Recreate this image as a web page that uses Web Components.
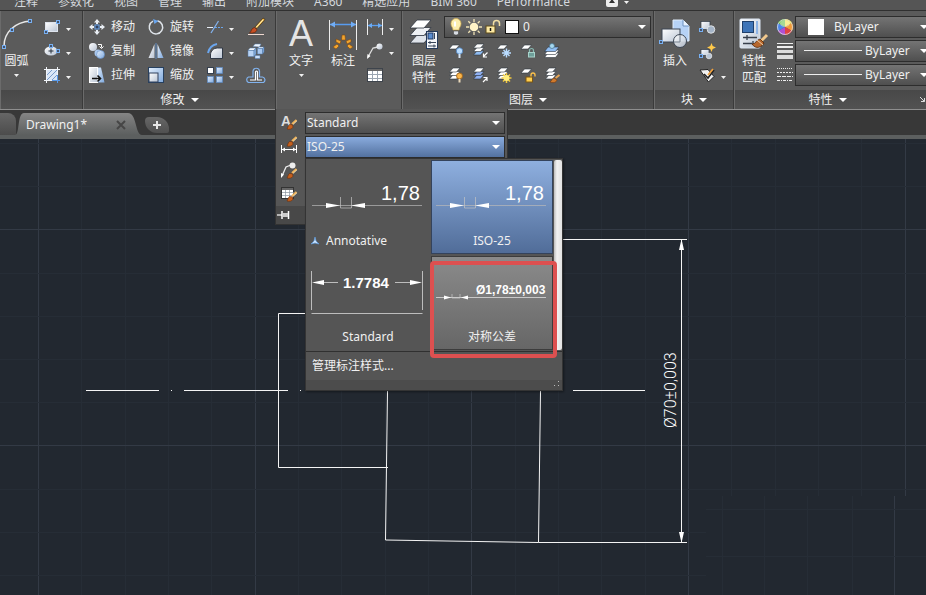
<!DOCTYPE html>
<html lang="zh-CN">
<head>
<meta charset="utf-8">
<title>Drawing1</title>
<style>
html,body{height:100%;margin:0}
body{overflow:hidden;background:#222830;color:#f0f0f0;font:12px/16px "Noto Sans","Noto Sans CJK SC",sans-serif}
</style>
</head>
<body>
<cad-app></cad-app>
<script>
const RESET = `*{box-sizing:border-box}
button,select{font:inherit;color:inherit;background:none;border:0;padding:0;margin:0}
button{cursor:pointer}svg{display:block}`;

function define(name, css, html) {
  customElements.define(name, class extends HTMLElement {
    connectedCallback() {
      if (this.shadowRoot) return;
      const root = this.attachShadow({ mode: 'open' });
      root.innerHTML = `<style>${RESET}${css}</style>${html(this)}`;
    }
  });
}

/* ---------- icon drawing helpers ---------- */
const DEFS = `<defs>
<linearGradient id="w" x1="0" y1="0" x2="1" y2="1"><stop offset="0" stop-color="#fff"/><stop offset="1" stop-color="#b9c4d4"/></linearGradient>
<linearGradient id="b" x1="0" y1="0" x2="1" y2="1"><stop offset="0" stop-color="#e4effc"/><stop offset="1" stop-color="#7fa9de"/></linearGradient>
</defs>`;
const node = (x, y) => `<rect x="${x}" y="${y}" width="3" height="3" fill="#45536b" stroke="#78b0f2"/>`;
const sheet = (x, y, f = '#fff') => `<path d="M${x + 4} ${y}h7l-3.500 4h-7z" fill="${f}" stroke="#2e3540" stroke-width=".6"/>`;
const stack = (c) => sheet(1, 8, c[2]) + sheet(1, 4.5, c[1]) + sheet(1, 1, c[0]);
const brush = (x, y) => `<g transform="translate(${x} ${y})"><path d="M5 4 9.500 0" stroke="#f0b45c" stroke-width="2"/><path d="M6 4.500 10 .8" stroke="#fff2cf" stroke-width=".7"/><path d="M0 9c1-1 .6-3 2.500-4.500l3 .3.500 2.400C4.500 9.500 2 9.600 0 9z" fill="#c4601e" stroke="#6b2e0a" stroke-width=".6"/></g>`;

const ICONS = {
  arc: [32, 32, `<path d="M3 28C3 15 13 4 30 3" fill="none" stroke="#e8e8e8" stroke-width="1.500"/>${node(1.5, 27.5)}${node(9.5, 10.5)}${node(27.5, 1.5)}`],
  rect: [16, 16, `<rect x="1.500" y="3.500" width="12" height="9" fill="url(#w)" stroke="#dfe5ee"/>${node(.5, 11.5)}${node(12.5, 1.5)}`],
  ellipse: [16, 16, `<ellipse cx="7" cy="8" rx="6.500" ry="4.500" fill="url(#w)"/><path d="M7 5.500v5M4.500 8h5" stroke="#27303d"/>${node(5.5, 1.5)}${node(12.5, 6.5)}`],
  hatch: [16, 16, `<rect x="3" y="3" width="10" height="10" fill="#dbe7f7"/><path d="M3 8l5-5M3 13l10-10M8 13l5-5" stroke="#6d93c6" stroke-width=".9"/><path d="M2.500 0v16M13.500 0v8M0 2.500h16M0 13.500h8" stroke="#f2f5fa"/><path d="M13.500 8v8M8 13.500h8" stroke="#5b9bea"/>`],
  move: [16, 16, `<g fill="#e9eef4"><path d="M8 0l3 3.500H9V5H7V3.500H5zM8 16l3-3.500H9V11H7v1.500H5zM0 8l3.500-3v2H5v2H3.500v2zM16 8l-3.500-3v2H11v2h1.500v2z"/></g><rect x="6" y="6" width="4" height="4" fill="#31415c" stroke="#6ea8ee"/>`],
  copy: [16, 16, `<circle cx="4" cy="4" r="4" fill="url(#w)"/><circle cx="9" cy="10" r="3.500" fill="#a9c7ed"/><circle cx="11.500" cy="11.500" r="4" fill="url(#b)" stroke="#5d8ac4" stroke-width=".6"/><path d="M9 1.500h3.500v3M10.500 3.500l2 2 2-2" fill="none" stroke="#fff"/>`],
  stretch: [16, 16, `<path d="M7 .5h5L15.500 15.500H7z" fill="url(#b)"/><rect x=".5" y=".5" width="8" height="15" fill="url(#w)" stroke="#fff"/><path d="M3 11.500h8M8.500 8.500l3 3-3 3" fill="none" stroke="#111" stroke-width="1.600"/>`],
  rotate: [16, 16, `<path d="M9.500 1.700A6.700 6.700 0 1 1 5 2.200" fill="none" stroke="#dfe4ea" stroke-width="1.500"/><path d="M5 0l5.500 2L6.500 5z" fill="#69a5ee"/>`],
  mirror: [16, 16, `<path d="M6.500 1v14H.5z" fill="url(#w)"/><path d="M9.500 1v14h6z" fill="url(#b)"/><path d="M8 0v16" stroke="#5f9ae0" stroke-width=".8"/>`],
  scale: [16, 16, `<rect x=".5" y=".5" width="15" height="15" fill="url(#b)" stroke="#27405f"/><rect x="1" y="6" width="9" height="9" fill="url(#w)" stroke="#31415c"/>`],
  trim: [16, 16, `<path d="M0 8.500h6" stroke="#e8edf5"/><path d="M8 8.500h8" stroke="#6aa4ea" stroke-dasharray="2 1"/><path d="M4 14 11.500 2" stroke="#82b2ee" stroke-width="1.300"/>`],
  fillet: [16, 16, `<path d="M3.500 15.500V12c0-4 3-7 7-7h5v10.500z" fill="url(#w)" stroke="#303947"/><path d="M1 10c1-5 4-8 9-9" fill="none" stroke="#6ba6ee" stroke-width="2"/>`],
  array: [16, 16, `<rect x=".5" y=".5" width="6" height="6" fill="#fff" stroke="#35404f"/><g fill="url(#b)" stroke="#5d8ac4" stroke-width=".7"><rect x="9.500" y=".5" width="6" height="6"/><rect x=".5" y="9.500" width="6" height="6"/><rect x="9.500" y="9.500" width="6" height="6"/></g>`],
  erase: [18, 18, `<path d="M1 16.500h16" stroke="#f0d9d0"/><path d="M8 9 16 0l2 1.500-8 9z" fill="#f4bd4e" stroke="#3c2a12" stroke-width=".7"/><path d="M9 9.500 16 2" stroke="#fff0b5"/><path d="M2.500 15c2-1 1.500-5 5-5.500l2.500 2c-.5 3-4 4-7.500 3.500z" fill="#c64f23" stroke="#632309" stroke-width=".7"/>`],
  explode: [16, 16, `<g stroke="#547caf" stroke-width=".5"><path d="M5 3.500 7 1h6l-1.500 3z" fill="#eef5fd"/><path d="M0 7.500 2 5h6L6 7.500z" fill="#f2f7fd"/><path d="M0 7.500h6v6H0z" fill="#b9d3f3"/><path d="M6 7.500 8 5v6l-2 2.500z" fill="#86aede"/><path d="M9.500 5.500 11 4h5l-1.500 1.500z" fill="#eef5fd"/><path d="M9.500 5.500h5v5.500h-5z" fill="#a9c8ef"/><path d="M14.500 5.500 16 4v5l-1.500 2z" fill="#7fa8da"/><path d="M7 12.500h5v3H7z" fill="#c9def8"/></g>`],
  offset: [18, 16, `<path d="M1.500 15.500a3 3 0 0 1 0-5.500h4.500V4a3.300 3.300 0 0 1 6.500 0v6h3a3 3 0 0 1 1 5.500z" fill="none" stroke="#81b3ef" stroke-width="1.200"/><path d="M3 13h5.500V5a1 1 0 0 1 2 0v8H15" fill="none" stroke="#fff" stroke-width="1.200"/>`],
  text: [32, 32, `<text x="4" y="28" font-family="Liberation Sans,sans-serif" font-size="36" fill="#e4e4e4">A</text>`],
  dim: [30, 32, `<path d="M1.500 2v30M28.500 2v30" stroke="#eee"/><path d="M2 6.500h26" stroke="#589cf0" stroke-width="1.500"/><path d="M2 6.500l5-3v6zM28 6.500l-5-3v6z" fill="#70adf6"/><g fill="#f2a52f" stroke="#7b4612" stroke-width=".6"><path d="M5 29l4-3 2 2-3 3zM8 21l5 2-1 3-4-2zM14 17h3l.5 5h-4zM23 21l-5 2 1 3 4-2zM25 29l-4-3-2 2 3 3z"/></g>`],
  linear: [16, 16, `<path d="M.5 0v16M15.500 0v16" stroke="#eee"/><path d="M1 6.500h14" stroke="#5b9ff2" stroke-width="1.300"/><path d="M1 6.500l4-2.500v5zM15 6.500l-4-2.500v5z" fill="#6aacf7"/>`],
  leader: [16, 16, `<path d="M1 14 6 5l5-1" fill="none" stroke="#ddd" stroke-width="1.300"/><path d="M0 16l.5-5 3 2z" fill="#fff"/><circle cx="12.500" cy="3.500" r="3" fill="url(#w)"/>`],
  table: [16, 16, `<rect x=".5" y="1.500" width="15" height="13" fill="#fff" stroke="#3e444c"/><path d="M1 3h14" stroke="#333" stroke-width="1.500"/><path d="M1 7.500h14M1 11.500h14M5.500 4v10M10.500 4v10" stroke="#9aa4b0"/>`],
  layers: [30, 32, `<g stroke="#2e3540" stroke-width=".8"><path d="M8 17h14l-7 8H1z" fill="#dfe3ea"/><path d="M8 9.500h14l-7 8H1z" fill="#eef0f4"/><path d="M8 2h14l-7 8H1z" fill="#fff"/></g><rect x="17.500" y="13.500" width="11" height="17" fill="#f4f6fa" stroke="#253a5c"/><rect x="19" y="15" width="5" height="6" fill="#5b8dd0" stroke="#1f3760"/><path d="M25.500 15v6M19 24.500h8M19 28h8" stroke="#39465a"/><path d="M21 23v3M25 26.500v3" stroke="#39465a"/>`],
  bulb: [14, 18, `<path d="M4 12C4 9 2 9 2 5.500a5 5 0 0 1 10 0C12 9 10 9 10 12z" fill="#fdeeae" stroke="#d4ad4c" stroke-width=".7"/><path d="M6 3.500v5" stroke="#fff" stroke-width="2"/><path d="M4.500 13h5v3l-1.500 1H6l-1.500-1z" fill="#d9dde3" stroke="#444" stroke-width=".6"/>`],
  sun: [16, 16, `<g stroke="#f1e3b5" stroke-width="1.300"><path d="M8 0v3M8 13v3M0 8h3M13 8h3M2.300 2.300l2 2M11.700 11.700l2 2M2.300 13.700l2-2M11.700 4.300l2-2"/></g><circle cx="8" cy="8" r="4.300" fill="#fff3c7"/>`],
  unlock: [16, 16, `<path d="M8.500 8V4.500a3 3 0 0 1 6 0V7" fill="none" stroke="#f3dfa4" stroke-width="1.500"/><rect x="1" y="7" width="9" height="7" fill="#fde9a3" stroke="#5c4a1a"/><path d="M5.500 9v3" stroke="#111" stroke-width="1.500"/>`],
  white: [16, 16, `<rect x="1.500" y="1.500" width="13" height="13" fill="#fff" stroke="#111"/>`],
  swatch: [16, 16, `<rect width="16" height="16" fill="#fff"/>`],
  lyoff: [16, 16, `${sheet(.5, 2)}<circle cx="11.500" cy="8" r="3.200" fill="#b9dcff" stroke="#4a7db9" stroke-width=".8"/><path d="M11.500 11v4" stroke="#d7e6f6" stroke-width="2"/>`],
  lyiso: [16, 16, `${stack(['#fff', '#fff', '#8fbcf2'])}<path d="M15.500 9.500l-4 4M11.500 10.500v3.500H15" fill="none" stroke="#fff" stroke-width="1.200"/>`],
  lyfrz: [16, 16, `${sheet(.5, 2)}<g stroke="#b9dcff" stroke-width="1.400"><path d="M10.500 5.500v9M6 10h9M7.500 7l6 6M13.500 7l-6 6"/></g>`],
  lylck: [16, 16, `${sheet(.5, 2)}<path d="M9.500 9V7.500a2 2 0 0 1 4 0V9" fill="none" stroke="#88bbb2" stroke-width="1.200"/><rect x="8.500" y="9.500" width="6" height="4.500" fill="#6f9f9a" stroke="#a7d2ca"/>`],
  lycur: [16, 16, `<g stroke="#2e3540" stroke-width=".6"><path d="M4 10h11l-3.500 4.500h-11z" fill="#fff"/><path d="M4 7h11l-3.500 4.500h-11z" fill="#fff"/><path d="M4 4h11l-3.500 4.500h-11z" fill="#8fbcf2"/></g><circle cx="8" cy="3" r="2.500" fill="#a6d8ef" stroke="#44718c" stroke-width=".7"/>`],
  lyon: [16, 16, `${stack(['#fff', '#fff', '#fff'])}<circle cx="11.500" cy="9" r="3" fill="#fbb64b" stroke="#9c5f14" stroke-width=".8"/><path d="M11.500 12v3.500" stroke="#ead9bb" stroke-width="2"/>`],
  lyuniso: [16, 16, `${stack(['#fff', '#8fb0f2', '#8fb0f2'])}<path d="M11 15l4-4M11.500 10.500H15V14" fill="none" stroke="#fff" stroke-width="1.200"/>`],
  lythw: [16, 16, `${stack(['#fff', '#fff', '#fff'])}<g stroke="#f4c93d" stroke-width="1.500"><path d="M10.500 6v10M5.500 11h10M7 7.500l7 7M14 7.500l-7 7"/></g><circle cx="10.500" cy="11" r="3" fill="#ffef80"/>`],
  lyulk: [16, 16, `${sheet(.5, 2)}<path d="M11 10V8a2 2 0 0 1 4 0v1.500" fill="none" stroke="#ffc34a" stroke-width="1.300"/><rect x="6" y="10" width="6.500" height="5" fill="#ffcf50" stroke="#7c5613"/>`],
  lymch: [16, 16, `${stack(['#fff', '#fff', '#fff'])}<path d="M15.500 8l-4 3" stroke="#e8a552" stroke-width="2"/><path d="M6 15c2-1 1-3 4-4l3 2c-1 3-4 3-7 2z" fill="#d07a2c" stroke="#74380e" stroke-width=".6"/>`],
  insert: [32, 32, `<path d="M14 2h10l6 6v15H14z" fill="#b6d2f6" stroke="#e1edfb"/><path d="M24 2v6h6" fill="#e8f2ff" stroke="#6d92c2"/><rect x="3" y="11" width="18" height="13" fill="url(#w)" stroke="#3c4654"/><circle cx="21" cy="23" r="6.500" fill="url(#w)" fill-opacity=".9" stroke="#3c4654"/><path d="M21 17v7h-6" fill="none" stroke="#7a8592"/>${node(.5, 22.5)}`],
  bedit: [16, 16, `<rect x="2" y="2.500" width="9" height="8" fill="url(#w)" stroke="#303947" stroke-width=".7"/><circle cx="12" cy="10.500" r="3.800" fill="#a5b5c8" stroke="#eee" stroke-width=".8"/>${node(.5, 9.5)}`],
  bnew: [16, 16, `<rect x="2" y="6.500" width="8" height="6" fill="url(#w)" stroke="#303947" stroke-width=".7"/><circle cx="10" cy="13" r="2.800" fill="#b8c5d5" stroke="#eee" stroke-width=".7"/><path d="M12.500 0l1.200 3L17 4.500 13.700 6l-1.200 3-1.200-3L8 4.500 11.300 3z" fill="#ffc94a"/>${node(.5, 11.5)}`],
  battr: [16, 16, `<path d="M1 3l8-.5 6 7-5.500 5.500z" fill="#f2f2f2" stroke="#222"/><path d="M5 7l4 4 6-8" fill="none" stroke="#222" stroke-width="1.600"/><path d="M9 8l5-6" stroke="#f0a13e" stroke-width="1.800"/>`],
  match: [30, 32, `<rect x="1" y="1" width="20" height="29" rx="1" fill="url(#w)" stroke="#dce6f3"/><rect x="3.500" y="3.500" width="11" height="11" fill="#3f75b8" stroke="#20406c"/><path d="M18 3v13" stroke="#8eb4e6" stroke-width="2"/><path d="M4 19.500h14M8 17v5M4 25.500h9M14 23v4" stroke="#38404c" stroke-width="1.300"/><path d="M22 23l6-6" stroke="#f0c78c" stroke-width="3"/><path d="M13 26c4 0 4-4 8-5l4 4c-2 4-8 7-12 1z" fill="#b8672d" stroke="#532708" stroke-width=".8"/><path d="M18 22l6 5" stroke="#ead2ae"/>`],
  wheel: [16, 16, `<path d="M8 8V0a8 8 0 0 1 7 4z" fill="#f4df4e"/><path d="M8 8l7-4a8 8 0 0 1 0 8z" fill="#f29a37"/><path d="M8 8l7 4a8 8 0 0 1-7 4z" fill="#e04242"/><path d="M8 8v8a8 8 0 0 1-7-4z" fill="#b04fd2"/><path d="M8 8l-7 4a8 8 0 0 1 0-8z" fill="#4b85ea"/><path d="M8 8L1 4a8 8 0 0 1 7-4z" fill="#69c04d"/><ellipse cx="8" cy="4.500" rx="5" ry="3.500" fill="#fff" opacity=".4"/><circle cx="8" cy="8" r="7.500" fill="none" stroke="#ddd" stroke-width=".8"/>`],
  weight: [16, 16, `<path d="M0 .5h16" stroke="#eee"/><path d="M0 4h16" stroke="#eee" stroke-width="2"/><path d="M0 8.500h16" stroke="#ddd" stroke-width="3"/><path d="M0 14h16" stroke="#ddd" stroke-width="4"/>`],
  ltype: [16, 16, `<g stroke="#eee"><path d="M0 1.500h16" stroke-dasharray="1 1"/><path d="M0 5.500h16" stroke-dasharray="2 1"/><path d="M0 9.500h16" stroke-dasharray="4 1"/><path d="M0 13.500h16" stroke-dasharray="3 1 1 1"/></g>`],
  line: [58, 16, `<path d="M0 7.500h58" stroke="#eee"/>`],
  stext: [16, 16, `<text x="0" y="12" font-family="Liberation Sans,sans-serif" font-size="14" font-weight="bold" fill="#ddd">A</text>${brush(6, 6)}`],
  sdim: [16, 16, `<path d="M.5 7v8M15.500 7v8M1 11.500h14" stroke="#fff"/><path d="M1 11.500l3-2v4zM15 11.500l-3-2v4z" fill="#fff"/>${brush(6, -1)}`],
  sleader: [16, 16, `<path d="M1 14 5 5l5-2" fill="none" stroke="#eee" stroke-width="1.300"/><path d="M0 16v-5l3 1.500z" fill="#fff"/><circle cx="11.500" cy="3.500" r="3" fill="#eee"/>${brush(6, 7)}`],
  stable: [16, 16, `<rect x=".5" y="1.500" width="12" height="11" fill="#fff" stroke="#333"/><path d="M1 3h11" stroke="#333" stroke-width="1.500"/><path d="M1 6.500h12M1 9.500h12M4.500 4v8M8.500 4v8" stroke="#8b95a1" stroke-width=".7"/>${brush(6, 6)}`],
  pin: [14, 12, `<path d="M0 6h5" stroke="#fff" stroke-width="1.200"/><path d="M5 2v8M11.500 2v8" stroke="#fff" stroke-width="1.500"/><path d="M6 4h5v4H6z" fill="#ccc"/>`],
  anno: [8, 8, `<path d="M4 0l1 4 3 3-4-1-4 1 3-3z" fill="#cfe6ff" stroke="#5c9be0" stroke-width=".7"/>`],
  down6: [5, 3, `<path d="M0 0h5L2.500 3z" fill="#f2f2f2"/>`],
  down8: [8, 4, `<path d="M0 0h8L4 4z" fill="#fff"/>`],
  launch: [5, 5, `<path d="M0 0l4.500 4.500M4.500 1v3.500H1" fill="none" stroke="#ddd"/>`],
  media: [12, 10, `<rect width="12" height="10" rx="2" fill="#eee"/><path d="M6 2l3 4H3z" fill="#333"/>`],
  plus: [8, 8, `<path d="M4 0v8M0 4h8" stroke="#e6e6e6" stroke-width="2"/>`],
  close: [8, 8, `<path d="M0 0l8 8M8 0L0 8" stroke="#464646" stroke-width="2"/>`],
  grip: [8, 8, `<g fill="#bbb"><path d="M5 0h1v1H5zM5 4h1v1H5zM1 4h1v1H1z"/></g>`]
};

define('cad-icon', `:host{display:inline-block;flex:none;line-height:0}svg{overflow:visible}`, el => {
  const [w, h, body] = ICONS[el.getAttribute('name')];
  return `<svg width="${w}" height="${h}" viewBox="0 0 ${w} ${h}" aria-hidden="true">${DEFS}${body}</svg>`;
});

/* ---------- controls ---------- */
define('cad-tool', `
:host{display:block}
button{display:flex;align-items:center;gap:6px;height:24px;white-space:nowrap}
.i{width:16px;display:flex;justify-content:center}
:host([big]) button{flex-direction:column;gap:0;height:auto;width:100%}
:host([big]) .i{height:37px;width:32px;align-items:center}
:host([big]) .t{line-height:17px}
:host([big]) .d{height:12px;display:flex;align-items:center}
.t span{display:block}`, el => {
  const label = el.getAttribute('label'), hint = el.getAttribute('hint');
  return `<button type="button"${hint ? ` aria-label="${hint}"` : ''}><span class="i"><cad-icon name="${el.getAttribute('icon')}"></cad-icon></span>${
    label ? `<span class="t">${label.split(' ').map(s => `<span>${s}</span>`).join('')}</span>` : ''}${
    el.hasAttribute('menu') ? '<span class="d"><cad-icon name="down6"></cad-icon></span>' : ''}</button>`;
});

define('cad-combo', `
:host{display:flex;align-items:center;height:22px;border:1px solid #2d2d2d;background:linear-gradient(#747474,#4f4f4f);padding-right:4px}
:host([active]){background:linear-gradient(#89abdd,#53719f)}
select{appearance:none;flex:1;min-width:0;height:20px;outline:0;line-height:20px}
option{background:#555}
.d{pointer-events:none}`, el => `<slot></slot><select aria-label="${el.getAttribute('hint')}"><option>${el.getAttribute('value')}</option></select><cad-icon class="d" name="down8"></cad-icon>`);

define('cad-panel', `
:host{display:flex;flex-direction:column;min-width:0;border-right:1px solid #3a3a3a;border-left:1px solid #6b6b6b;background:#5b5b5b;position:relative}
.body{height:79px;padding-top:4px;display:flex;align-items:flex-start}
.title{display:flex;justify-content:center;align-items:center;gap:6px;width:100%;height:19px;background:linear-gradient(#484848,#525252)}
:host([open]) .title{background:none}
:host([launcher]) .foot{display:grid;grid-template-columns:1fr 5px;align-items:center;background:linear-gradient(#484848,#525252);padding-right:8px}
:host([launcher]) .title{background:none}`, el => {
  const t = el.getAttribute('title-text');
  return `<div class="body"><slot></slot></div><div class="foot">${t ? `<button class="title" type="button">${t}<cad-icon name="down8"></cad-icon></button>` : '<div class="title"></div>'}${el.hasAttribute('launcher') ? '<cad-icon name="launch"></cad-icon>' : ''}</div><slot name="over"></slot>`;
});

/* ---------- menu bar ---------- */
const MENUS = ['注释', '参数化', '视图', '管理', '输出', '附加模块', 'A360', '精选应用', 'BIM 360', 'Performance'];
define('cad-menubar', `
:host{display:block;background:#555;border-bottom:1px solid #303030}
nav{display:flex;align-items:flex-end;gap:20px;height:10px;padding-left:14px;overflow:hidden;white-space:nowrap;color:#d4d8dd}
a{color:inherit;text-decoration:none;line-height:16px}
.m{display:flex;align-items:center;gap:6px;height:16px;margin-left:16px}`,
() => `<nav>${MENUS.map(m => `<a href="#">${m}</a>`).join('')}<button class="m" type="button" aria-label="视频"><cad-icon name="media"></cad-icon><cad-icon name="down6"></cad-icon></button></nav>`);

/* ---------- style gallery ---------- */
const dimPreview = `<path d="M5 42.500h110" stroke="#b9b9b9" stroke-width=".7"/><path d="M33.500 34v11h11V34" fill="none" stroke="#c4c4c4" stroke-width=".7"/><path d="M19 40l14 2.500-14 2.500zM58 40l-14 2.500 14 2.500z" fill="#fff"/><text x="74" y="37" font-size="20">1,78</text>`;
const STYLES = [
  ['Annotative', 'anno', dimPreview],
  ['ISO-25', 'sel', dimPreview],
  ['Standard', '', `<path d="M4.500 12v39M115.500 12v39M4.500 54.500h111M16 23.500h15M88 23.500h15" stroke="#d8d8d8" stroke-width=".8" fill="none"/><path d="M5 23.500l12-2.500v5zM115 23.500L103 21v5z" fill="#fff"/><text x="36" y="29" font-size="15" font-weight="bold">1.7784</text>`],
  ['对称公差', 'hot', `<path d="M5 38.500h110" stroke="#ddd" stroke-width=".8"/><path d="M21 35v4h8v-4" fill="none" stroke="#ccc" stroke-width=".7"/><path d="M13 36.500l7 2-7 2zM37 36.500l-7 2 7 2z" fill="#fff"/><text x="45" y="35" font-size="12" font-weight="bold">Ø1,78±0,003</text>`]
];
define('cad-style-gallery', `
:host{display:block;background:#555;border:1px solid #343434;box-shadow:1px 1px 2px #0006}
.top{display:flex;justify-content:space-between;border-bottom:1px solid #303030}
.grid{display:grid;grid-template-columns:122px 122px;gap:2px;padding:1px 0 1px 1px;flex:none}
.cell{position:relative;height:94px;text-align:center;border:0}
.cell svg.p{width:122px;height:68px;font-family:"Liberation Sans",sans-serif;fill:#fff}
.cap{display:flex;justify-content:center;align-items:center;gap:7px;height:20px}
.anno .cap{justify-content:flex-start;padding-left:4px}
.sel{background:linear-gradient(#8fb0e0,#506c98);box-shadow:inset 0 0 0 1px #34435c}
.hot{background:linear-gradient(#8b8b8b,#666);box-shadow:inset 0 0 0 1px #3c3c3c}
.hot::after{content:"";position:absolute;inset:5px -4px -8px -1px;border:4px solid #dd5050;border-radius:4px;z-index:1}
.bar{width:8px;background:linear-gradient(90deg,#bdbdbd,#f2f2f2 3px,#e2e2e2);border-radius:2px;margin:1px 0}
.manage{display:block;width:100%;height:28px;padding-left:6px;text-align:left}
.foot{height:10px;background:#4c4c4c;display:flex;justify-content:flex-end;padding:1px}`,
() => `<div class="top"><div class="grid">${STYLES.map(([n, c, p]) => `<button type="button" class="cell ${c}"><svg class="p" viewBox="0 0 122 68">${p}</svg><span class="cap">${c === 'anno' ? '<cad-icon name="anno"></cad-icon>' : ''}<span>${n}</span></span></button>`).join('')}</div><div class="bar"></div></div>
<button class="manage" type="button">管理标注样式...</button><div class="foot"><cad-icon name="grip"></cad-icon></div>`);

define('cad-style-popup', `
:host{position:absolute;top:100%;left:-2px;width:233px;z-index:5;background:#565656;border:1px solid #333;border-top:0;display:grid;grid-template-columns:29px 1fr}
.tools{display:flex;flex-direction:column;align-items:stretch;padding-top:1px}
cad-tool{padding-left:5px}
.pin{height:18px;background:#484848;display:flex;align-items:center;padding-left:1px}
.combos{display:grid;gap:2px;padding:3px 2px 0 0;align-content:start;position:relative}
.pad{width:1px}
cad-style-gallery{position:absolute;top:49px;left:0;width:258px}`,
() => `<div class="tools"><cad-tool icon="stext" hint="文字样式"></cad-tool><cad-tool icon="sdim" hint="标注样式"></cad-tool><cad-tool icon="sleader" hint="多重引线样式"></cad-tool><cad-tool icon="stable" hint="表格样式"></cad-tool><button class="pin" type="button" aria-label="固定"><cad-icon name="pin"></cad-icon></button></div>
<div class="combos"><cad-combo value="Standard" hint="文字样式"><span class="pad"></span></cad-combo><cad-combo active value="ISO-25" hint="标注样式"><span class="pad"></span></cad-combo><cad-style-gallery></cad-style-gallery></div>`);

/* ---------- ribbon ---------- */
define('cad-ribbon', `
:host{display:block;position:relative;z-index:3;border-bottom:1px solid #8e8e8e;background:#5b5b5b}
.r{display:grid;grid-template-columns:83fr 193fr 126fr 252fr 80fr 200fr;width:calc(100% + 8px)}
.col{display:flex;flex-direction:column}
.draw{padding-left:12px}
.draw1{width:31px}
.mod{display:grid;grid-template-columns:59px 59px 41px auto;padding-left:5px}
.a{width:32px;margin:0 0 0 8px}.b{margin-left:10px;width:32px}
.anc{margin-left:8px}
.lp{width:34px;margin-left:4px}
.lay{flex:1;margin:1px 2px 0 3px;min-width:0}
.grid{display:grid;grid-template-columns:repeat(5,24px);padding:1px 0 0 4px}
.lay cad-icon{margin-right:3px}
.lay cad-icon:first-child{margin-left:4px}
.blk{width:34px;margin-left:3px}.bc{margin-left:7px}
.pp{width:34px;margin-left:2px}.pi{margin-left:6px}
.pc{flex:1;min-width:0;display:grid;gap:2px;margin:1px 0 0 2px}
.pc cad-icon{margin:0 3px 0 8px}
.pc cad-icon.s{margin:0 10px 0 12px}`,
() => `<div class="r">
<cad-panel><cad-tool class="draw1" big menu icon="arc" label="圆弧"></cad-tool><div class="col draw"><cad-tool menu icon="rect" hint="矩形"></cad-tool><cad-tool menu icon="ellipse" hint="椭圆"></cad-tool><cad-tool menu icon="hatch" hint="图案填充"></cad-tool></div></cad-panel>
<cad-panel title-text="修改"><div class="mod">
<cad-tool icon="move" label="移动"></cad-tool><cad-tool icon="rotate" label="旋转"></cad-tool><cad-tool menu icon="trim" hint="修剪"></cad-tool><cad-tool icon="erase" hint="删除"></cad-tool>
<cad-tool icon="copy" label="复制"></cad-tool><cad-tool icon="mirror" label="镜像"></cad-tool><cad-tool menu icon="fillet" hint="圆角"></cad-tool><cad-tool icon="explode" hint="分解"></cad-tool>
<cad-tool icon="stretch" label="拉伸"></cad-tool><cad-tool icon="scale" label="缩放"></cad-tool><cad-tool menu icon="array" hint="阵列"></cad-tool><cad-tool icon="offset" hint="偏移"></cad-tool></div></cad-panel>
<cad-panel open><cad-tool class="a" big menu icon="text" label="文字"></cad-tool><cad-tool class="b" big icon="dim" label="标注"></cad-tool><div class="col anc"><cad-tool menu icon="linear" hint="线性"></cad-tool><cad-tool menu icon="leader" hint="引线"></cad-tool><cad-tool icon="table" hint="表格"></cad-tool></div><cad-style-popup slot="over"></cad-style-popup></cad-panel>
<cad-panel title-text="图层"><cad-tool class="lp" big icon="layers" label="图层 特性"></cad-tool><div class="lay"><cad-combo value="0" hint="图层"><cad-icon name="bulb"></cad-icon><cad-icon name="sun"></cad-icon><cad-icon name="unlock"></cad-icon><cad-icon name="white"></cad-icon></cad-combo><div class="grid">${['lyoff:关', 'lyiso:隔离', 'lyfrz:冻结', 'lylck:锁定', 'lycur:置为当前', 'lyon:打开所有图层', 'lyuniso:取消隔离', 'lythw:解冻', 'lyulk:解锁', 'lymch:匹配图层'].map(s => { const [i, h] = s.split(':'); return `<cad-tool icon="${i}" hint="${h}"></cad-tool>`; }).join('')}</div></div></cad-panel>
<cad-panel title-text="块"><cad-tool class="blk" big icon="insert" label="插入"></cad-tool><div class="col bc"><cad-tool icon="bedit" hint="编辑块"></cad-tool><cad-tool icon="bnew" hint="创建块"></cad-tool><cad-tool menu icon="battr" hint="编辑属性"></cad-tool></div></cad-panel>
<cad-panel launcher title-text="特性"><cad-tool class="pp" big icon="match" label="特性 匹配"></cad-tool><div class="col pi"><cad-tool icon="wheel" hint="颜色"></cad-tool><cad-tool icon="weight" hint="线宽"></cad-tool><cad-tool icon="ltype" hint="线型"></cad-tool></div><div class="pc"><cad-combo value="ByLayer" hint="颜色"><cad-icon class="s" name="swatch"></cad-icon></cad-combo><cad-combo value="ByLayer" hint="线宽"><cad-icon name="line"></cad-icon></cad-combo><cad-combo value="ByLayer" hint="线型"><cad-icon name="line"></cad-icon></cad-combo></div></cad-panel>
</div>`);

/* ---------- document tabs ---------- */
const tabShape = (w, h, c1, c2) => `<svg class="bg" viewBox="0 0 ${w} ${h}" preserveAspectRatio="none" aria-hidden="true"><defs><linearGradient id="g" x2="0" y2="1"><stop offset="0" stop-color="${c1}"/><stop offset="1" stop-color="${c2}"/></linearGradient></defs><path d="M0 ${h}C5 ${h} 2 0 9 0H${w - 14}C${w - 5} 0 ${w - 7} ${h} ${w} ${h}z" fill="url(#g)"/></svg>`;
define('cad-doc-tabs', `
:host{display:flex;height:29px;background:#383838;border-bottom:4px solid #5c5f5f;padding-top:3px}
button{position:relative;height:22px}
.bg{position:absolute;inset:0;width:100%;height:100%}
.stub{width:16px;background:linear-gradient(#666,#4c4c4c);border-radius:0 8px 0 0}
.doc{display:flex;width:127px;margin-left:-1px}
.doc>button{display:flex;align-items:center;width:100%;padding:1px 17px 0 11px;justify-content:space-between}
.doc span,.doc cad-icon{position:relative}
.add{width:24px;height:16px;margin:4px 0 0 3px;display:flex;align-items:center;justify-content:center;background:linear-gradient(#666,#505050);border-radius:4px 12px 2px 12px}`,
() => `<button class="stub" type="button" aria-label="开始"></button><div class="doc"><button type="button">${tabShape(127, 22, '#858585', '#5c5f5f')}<span>Drawing1*</span><cad-icon name="close"></cad-icon></button></div><button class="add" type="button" aria-label="新建"><cad-icon name="plus"></cad-icon></button>`);

/* ---------- drawing area ---------- */
define('cad-drawing', `
:host{display:block;min-height:0;background:#222830;overflow:hidden}
svg{width:100%;height:100%}`, () => {
  const v = [], h = [];
  for (let i = 0; i < 22; i++) v.push(`<path d="M${Math.round(38 + (i - 1) * 43.33) + .5} 139V595" class="${i % 5 === 1 ? 'M' : 'm'}"/>`);
  for (let i = 0; i < 11; i++) h.push(`<path d="M0 ${Math.round(143 + i * 43.2) + .5}H926" class="${i % 5 === 2 ? 'M' : 'm'}"/>`);
  return `<svg viewBox="0 139 926 456" preserveAspectRatio="xMinYMin slice" role="img" aria-label="图形">
<style>.m{stroke:#262d36}.M{stroke:#333a45}</style>${v.join('')}${h.join('')}
<rect x="706" y="496" width="220" height="99" fill="#222830"/>
${[722, 764, 807, 852].map(x => `<path class="m" d="M${x}.5 496V595"/>`).join('')}<path class="M" d="M894.500 496V595"/><path class="m" d="M706 509.500H926M706 556.500H926"/>
<g fill="none" stroke="#f4f4f4">
<path d="M306 313.500H278.500V467.500H388"/>
<path d="M86 390.500h73M171 390.500h1M184 390.500h104M300 390.500h1M313 390.500h105M430 390.500h1M443 390.500h103M560 390.500h1M573 390.500h72"/>
<path d="M387.500 391 385.500 540 538.500 542.500 540.500 391M538.500 542.500H687M563 239.500H687M681.500 240V542"/></g>
<path d="M681.500 239l2.500 11h-5zM681.500 543l2.500-11h-5z" fill="#fff"/>
<text transform="translate(676 428) rotate(-90)" font-family="Roboto,sans-serif" font-weight="300" font-size="16" fill="#fff">Ø70±0,003</text></svg>`;
});

define('cad-app', `:host{display:flex;flex-direction:column;height:100vh;overflow:hidden}cad-drawing{flex:1}`,
() => `<cad-menubar></cad-menubar><cad-ribbon></cad-ribbon><cad-doc-tabs></cad-doc-tabs><cad-drawing></cad-drawing>`);
</script>
</body>
</html>
